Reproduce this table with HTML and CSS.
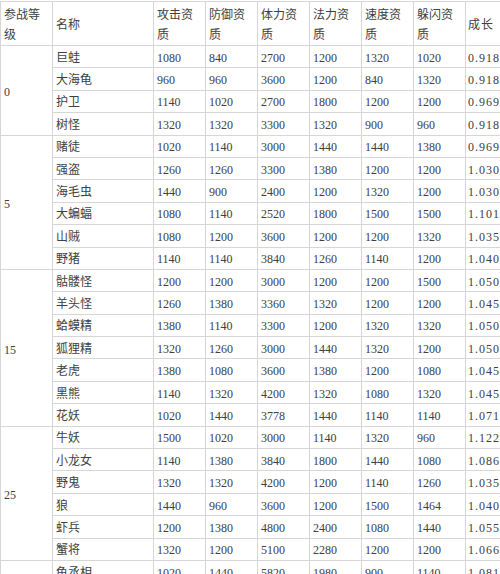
FILE: index.html
```html
<!DOCTYPE html>
<html lang="zh-CN">
<head>
<meta charset="utf-8">
<title>怪物资质表</title>
<link rel="stylesheet" href="styles.css">
</head>
<body>
<table class="stats">
  <colgroup>
    <col class="c-level"><col class="c-name"><col class="c-num"><col class="c-num"><col class="c-num"><col class="c-num"><col class="c-num"><col class="c-num"><col class="c-last">
  </colgroup>
  <thead>
    <tr class="head">
      <th>参战等级</th><th>名称</th><th>攻击资质</th><th>防御资质</th><th>体力资质</th><th>法力资质</th><th>速度资质</th><th>躲闪资质</th><th class="g">成长</th>
    </tr>
  </thead>
  <tbody>
    <tr><td class="level" rowspan="4">0</td><td>巨蛙</td><td>1080</td><td>840</td><td>2700</td><td>1200</td><td>1320</td><td>1020</td><td class="g">0.918</td></tr>
    <tr><td>大海龟</td><td>960</td><td>960</td><td>3600</td><td>1200</td><td>840</td><td>1320</td><td class="g">0.918</td></tr>
    <tr><td>护卫</td><td>1140</td><td>1020</td><td>2700</td><td>1800</td><td>1200</td><td>1200</td><td class="g">0.969</td></tr>
    <tr><td>树怪</td><td>1320</td><td>1320</td><td>3300</td><td>1320</td><td>900</td><td>960</td><td class="g">0.918</td></tr>

    <tr><td class="level" rowspan="6">5</td><td>赌徒</td><td>1020</td><td>1140</td><td>3000</td><td>1440</td><td>1440</td><td>1380</td><td class="g">0.969</td></tr>
    <tr><td>强盗</td><td>1260</td><td>1260</td><td>3300</td><td>1380</td><td>1200</td><td>1200</td><td class="g">1.030</td></tr>
    <tr><td>海毛虫</td><td>1440</td><td>900</td><td>2400</td><td>1200</td><td>1320</td><td>1200</td><td class="g">1.030</td></tr>
    <tr><td>大蝙蝠</td><td>1080</td><td>1140</td><td>2520</td><td>1800</td><td>1500</td><td>1500</td><td class="g">1.101</td></tr>
    <tr><td>山贼</td><td>1080</td><td>1200</td><td>3600</td><td>1200</td><td>1200</td><td>1320</td><td class="g">1.035</td></tr>
    <tr><td>野猪</td><td>1140</td><td>1140</td><td>3840</td><td>1260</td><td>1140</td><td>1200</td><td class="g">1.040</td></tr>

    <tr><td class="level" rowspan="7">15</td><td>骷髅怪</td><td>1200</td><td>1200</td><td>3000</td><td>1200</td><td>1200</td><td>1500</td><td class="g">1.050</td></tr>
    <tr><td>羊头怪</td><td>1260</td><td>1380</td><td>3360</td><td>1320</td><td>1200</td><td>1200</td><td class="g">1.045</td></tr>
    <tr><td>蛤蟆精</td><td>1380</td><td>1140</td><td>3300</td><td>1200</td><td>1320</td><td>1320</td><td class="g">1.050</td></tr>
    <tr><td>狐狸精</td><td>1320</td><td>1260</td><td>3000</td><td>1440</td><td>1320</td><td>1200</td><td class="g">1.050</td></tr>
    <tr><td>老虎</td><td>1380</td><td>1080</td><td>3600</td><td>1380</td><td>1200</td><td>1080</td><td class="g">1.045</td></tr>
    <tr><td>黑熊</td><td>1140</td><td>1320</td><td>4200</td><td>1320</td><td>1080</td><td>1320</td><td class="g">1.045</td></tr>
    <tr><td>花妖</td><td>1020</td><td>1440</td><td>3778</td><td>1440</td><td>1140</td><td>1140</td><td class="g">1.071</td></tr>

    <tr><td class="level" rowspan="6">25</td><td>牛妖</td><td>1500</td><td>1020</td><td>3000</td><td>1140</td><td>1320</td><td>960</td><td class="g">1.122</td></tr>
    <tr><td>小龙女</td><td>1140</td><td>1380</td><td>3840</td><td>1800</td><td>1440</td><td>1080</td><td class="g">1.086</td></tr>
    <tr><td>野鬼</td><td>1320</td><td>1320</td><td>4200</td><td>1200</td><td>1140</td><td>1260</td><td class="g">1.035</td></tr>
    <tr><td>狼</td><td>1440</td><td>960</td><td>3600</td><td>1200</td><td>1500</td><td>1464</td><td class="g">1.040</td></tr>
    <tr><td>虾兵</td><td>1200</td><td>1380</td><td>4800</td><td>2400</td><td>1080</td><td>1440</td><td class="g">1.055</td></tr>
    <tr><td>蟹将</td><td>1320</td><td>1200</td><td>5100</td><td>2280</td><td>1200</td><td>1200</td><td class="g">1.066</td></tr>

    <tr><td class="level"></td><td>龟丞相</td><td>1020</td><td>1440</td><td>5820</td><td>1980</td><td>900</td><td>1140</td><td class="g">1.081</td></tr>
  </tbody>
</table>
</body>
</html>
```

FILE: styles.css
```css
html, body {
  margin: 0;
  padding: 0;
  background: #ffffff;
  overflow: hidden;
}

body {
  width: 500px;
  height: 574px;
}

.stats {
  border-collapse: collapse;
  table-layout: fixed;
  width: 500px;
  margin-top: 1px;
  font-family: "Liberation Serif", "Noto Sans CJK SC", serif;
  font-size: 12px;
  color: #404040;
}

.c-level { width: 52px; }
.c-name { width: 101px; }
.c-num { width: 52px; }
.c-last { width: 35px; }

.stats th,
.stats td {
  border: 1px solid #d6d6d6;
  padding: 2px 4px 0 3px;
  text-align: left;
  vertical-align: middle;
  font-weight: normal;
  line-height: 16px;
  white-space: normal;
}

.stats .head th {
  height: 43px;
  line-height: 20px;
  padding-top: 3px;
  padding-bottom: 0;
  box-sizing: border-box;
}

.stats tbody tr {
  height: 22.4px;
}

.stats td.level {
  padding-top: 4px;
}

.stats .g {
  padding-left: 2px;
  padding-right: 0;
  border-right: none;
  letter-spacing: 1px;
  white-space: nowrap;
}
```
